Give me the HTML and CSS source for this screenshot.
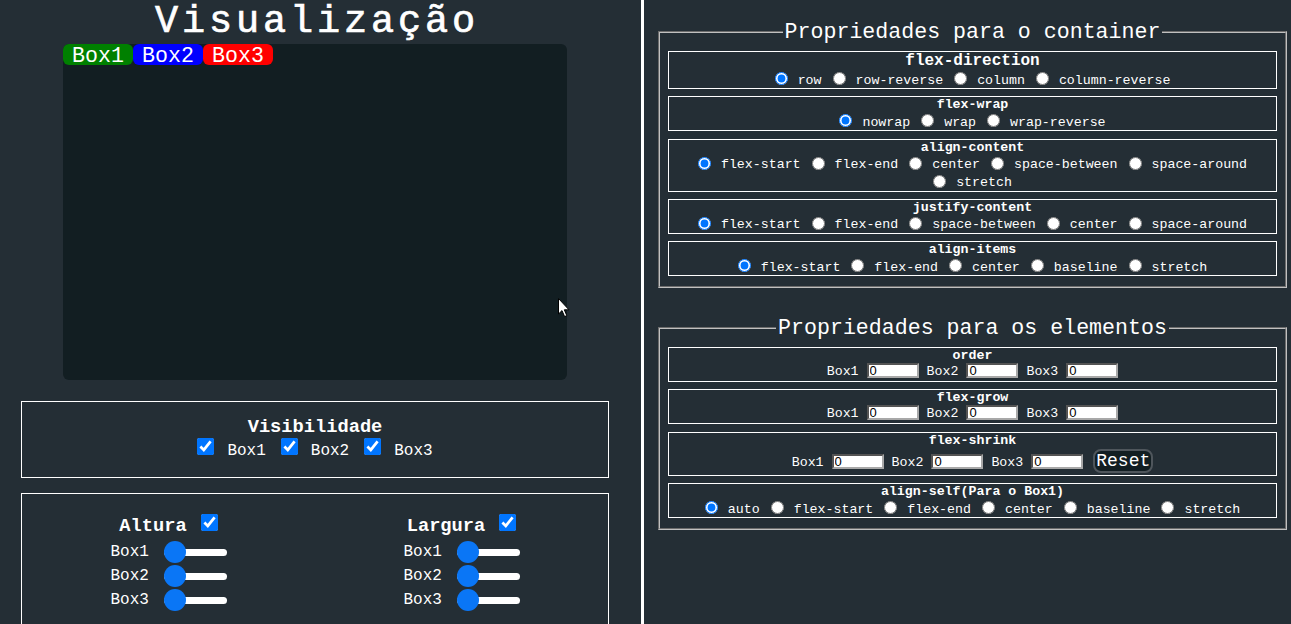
FILE: index.html
```html
<!DOCTYPE html>
<html lang="pt">
<head>
<meta charset="utf-8">
<title>Flexbox</title>
<link rel="stylesheet" href="styles.css">
</head>
<body>
<div class="page">
  <section class="left">
    <h1 class="title">Visualização</h1>
    <div class="preview">
      <div class="box b1">Box1</div>
      <div class="box b2">Box2</div>
      <div class="box b3">Box3</div>
    </div>
    <div class="panel vis">
      <h3 class="vhead">Visibilidade</h3>
      <div class="checks">
        <label class="chk"><input type="checkbox" checked><span>Box1</span></label>
        <label class="chk"><input type="checkbox" checked><span>Box2</span></label>
        <label class="chk"><input type="checkbox" checked><span>Box3</span></label>
      </div>
    </div>
    <div class="panel sizes">
      <div class="group">
        <div class="ghead"><span>Altura</span><input type="checkbox" checked></div>
        <div class="srows">
          <div class="srow"><span>Box1</span><input type="range" min="0" max="100" value="0"></div>
          <div class="srow"><span>Box2</span><input type="range" min="0" max="100" value="0"></div>
          <div class="srow"><span>Box3</span><input type="range" min="0" max="100" value="0"></div>
        </div>
      </div>
      <div class="group">
        <div class="ghead"><span>Largura</span><input type="checkbox" checked></div>
        <div class="srows">
          <div class="srow"><span>Box1</span><input type="range" min="0" max="100" value="0"></div>
          <div class="srow"><span>Box2</span><input type="range" min="0" max="100" value="0"></div>
          <div class="srow"><span>Box3</span><input type="range" min="0" max="100" value="0"></div>
        </div>
      </div>
    </div>
    <svg class="cursor" width="12" height="20" viewBox="0 0 12 20"><path d="M0.5 0.5 L0.5 16 L4 12.6 L6.6 18.6 L8.8 17.6 L6.3 11.8 L11 11.8 Z" fill="#fff" stroke="#000" stroke-width="1"/></svg>
  </section>

  <section class="right">
    <fieldset class="fs">
      <legend>Propriedades para o container</legend>
      <div class="pbox">
        <h4 class="phead big">flex-direction</h4>
        <div class="opts">
          <label class="opt"><input type="radio" name="fd" checked><span>row</span></label>
          <label class="opt"><input type="radio" name="fd"><span>row-reverse</span></label>
          <label class="opt"><input type="radio" name="fd"><span>column</span></label>
          <label class="opt"><input type="radio" name="fd"><span>column-reverse</span></label>
        </div>
      </div>
      <div class="pbox">
        <h5 class="phead">flex-wrap</h5>
        <div class="opts">
          <label class="opt"><input type="radio" name="fw" checked><span>nowrap</span></label>
          <label class="opt"><input type="radio" name="fw"><span>wrap</span></label>
          <label class="opt"><input type="radio" name="fw"><span>wrap-reverse</span></label>
        </div>
      </div>
      <div class="pbox">
        <h5 class="phead">align-content</h5>
        <div class="opts">
          <label class="opt"><input type="radio" name="ac" checked><span>flex-start</span></label>
          <label class="opt"><input type="radio" name="ac"><span>flex-end</span></label>
          <label class="opt"><input type="radio" name="ac"><span>center</span></label>
          <label class="opt"><input type="radio" name="ac"><span>space-between</span></label>
          <label class="opt"><input type="radio" name="ac"><span>space-around</span></label>
          <label class="opt"><input type="radio" name="ac"><span>stretch</span></label>
        </div>
      </div>
      <div class="pbox">
        <h5 class="phead">justify-content</h5>
        <div class="opts">
          <label class="opt"><input type="radio" name="jc" checked><span>flex-start</span></label>
          <label class="opt"><input type="radio" name="jc"><span>flex-end</span></label>
          <label class="opt"><input type="radio" name="jc"><span>space-between</span></label>
          <label class="opt"><input type="radio" name="jc"><span>center</span></label>
          <label class="opt"><input type="radio" name="jc"><span>space-around</span></label>
        </div>
      </div>
      <div class="pbox">
        <h5 class="phead">align-items</h5>
        <div class="opts">
          <label class="opt"><input type="radio" name="ai" checked><span>flex-start</span></label>
          <label class="opt"><input type="radio" name="ai"><span>flex-end</span></label>
          <label class="opt"><input type="radio" name="ai"><span>center</span></label>
          <label class="opt"><input type="radio" name="ai"><span>baseline</span></label>
          <label class="opt"><input type="radio" name="ai"><span>stretch</span></label>
        </div>
      </div>
    </fieldset>

    <fieldset class="fs fs2">
      <legend>Propriedades para os elementos</legend>
      <div class="pbox">
        <h5 class="phead">order</h5>
        <div class="irow">
          <span>Box1</span><input class="num" type="text" value="0">
          <span>Box2</span><input class="num" type="text" value="0">
          <span>Box3</span><input class="num" type="text" value="0">
        </div>
      </div>
      <div class="pbox">
        <h5 class="phead">flex-grow</h5>
        <div class="irow">
          <span>Box1</span><input class="num" type="text" value="0">
          <span>Box2</span><input class="num" type="text" value="0">
          <span>Box3</span><input class="num" type="text" value="0">
        </div>
      </div>
      <div class="pbox">
        <h5 class="phead">flex-shrink</h5>
        <div class="irow shrink">
          <span>Box1</span><input class="num" type="text" value="0">
          <span>Box2</span><input class="num" type="text" value="0">
          <span>Box3</span><input class="num" type="text" value="0">
          <button class="reset" type="button">Reset</button>
        </div>
      </div>
      <div class="pbox">
        <h5 class="phead">align-self(Para o Box1)</h5>
        <div class="opts">
          <label class="opt"><input type="radio" name="as" checked><span>auto</span></label>
          <label class="opt"><input type="radio" name="as"><span>flex-start</span></label>
          <label class="opt"><input type="radio" name="as"><span>flex-end</span></label>
          <label class="opt"><input type="radio" name="as"><span>center</span></label>
          <label class="opt"><input type="radio" name="as"><span>baseline</span></label>
          <label class="opt"><input type="radio" name="as"><span>stretch</span></label>
        </div>
      </div>
    </fieldset>
  </section>
</div>
</body>
</html>
```

FILE: styles.css
```css
* { box-sizing: border-box; }

html, body {
  margin: 0;
  height: 100%;
}

body {
  background: #242e35;
  color: #fff;
  font-family: "Liberation Mono", "DejaVu Sans Mono", monospace;
  overflow: hidden;
}

.page {
  display: flex;
  height: 624px;
}

/* ---------- left column ---------- */
.left {
  position: relative;
  flex: none;
  width: 644px;
  border-right: 3px solid #fff;
  padding-right: 11px;
}

.title {
  margin: 0;
  height: 44px;
  padding-left: 3.9px;
  font-size: 38.5px;
  font-weight: normal;
  letter-spacing: 3.9px;
  line-height: 44px;
  text-align: center;
  -webkit-text-stroke: 0.7px #fff;
}

.preview {
  width: 504px;
  height: 336px;
  margin: 0 auto;
  background: #121e22;
  border-radius: 6px;
  display: flex;
  align-items: flex-start;
}

.box {
  width: 70px;
  height: 21px;
  padding-top: 3px;
  font-size: 21.6px;
  line-height: 18px;
  text-align: center;
  border-radius: 6px;
  color: #fff;
}
.b1 { background: #008000; }
.b2 { background: #0000ff; }
.b3 { background: #ff0000; }

.panel {
  width: 588px;
  margin: 0 auto;
  border: 1px solid #fff;
}

.vis {
  margin-top: 21px;
  padding: 14px 0 17px;
  text-align: center;
}

.vhead {
  margin: 0;
  font-size: 18.72px;
  font-weight: bold;
}

.checks {
  display: flex;
  justify-content: center;
  align-items: baseline;
  gap: 15px;
  font-size: 16px;
}

.chk {
  display: inline-flex;
  align-items: baseline;
  gap: 13px;
}

input[type="checkbox"] {
  width: 17px;
  height: 17px;
  margin: 0;
  accent-color: #0075ff;
}

.sizes {
  margin-top: 15px;
  padding: 20px 0 30px;
  display: flex;
  justify-content: space-around;
}

.group {
  width: 116px;
  display: flex;
  flex-direction: column;
  align-items: center;
}

.ghead {
  display: flex;
  align-items: baseline;
  gap: 14px;
  font-size: 18.72px;
  font-weight: bold;
}

.srows {
  margin-top: 3px;
  width: 116px;
}

.srow {
  height: 24px;
  display: flex;
  align-items: center;
  justify-content: space-between;
  font-size: 16px;
}

input[type="range"] {
  -webkit-appearance: none;
  appearance: none;
  width: 63px;
  height: 22px;
  margin: 0;
  background: transparent;
}
input[type="range"]::-webkit-slider-runnable-track {
  height: 7px;
  background: #fff;
  border-radius: 4px;
}
input[type="range"]::-webkit-slider-thumb {
  -webkit-appearance: none;
  appearance: none;
  width: 22px;
  height: 22px;
  margin-top: -7.5px;
  border: none;
  border-radius: 50%;
  background: #0a76f6;
}

.cursor {
  position: absolute;
  left: 558px;
  top: 298px;
}

/* ---------- right column ---------- */
.right {
  flex: 1;
  min-width: 0;
  padding: 20px 4px 0 14px;
}

.fs {
  margin: 0;
  min-width: 0;
  border: 2px groove #c0c0c0;
  padding: 7px 8px 10px;
}

.fs2 {
  margin-top: 28px;
}

legend {
  margin: 0 auto;
  padding: 0 2px;
  font-size: 21.6px;
  line-height: normal;
}

.pbox {
  border: 1px solid #fff;
  text-align: center;
  margin-top: 7.3px;
}
legend + .pbox { margin-top: 0; }

.phead {
  margin: 0;
  font-size: 13.28px;
  font-weight: bold;
  line-height: normal;
}
.phead.big { font-size: 16px; }

.opts {
  display: flex;
  flex-wrap: wrap;
  justify-content: center;
  column-gap: 11px;
  font-size: 13.28px;
}

.opt {
  display: inline-flex;
  align-items: center;
  gap: 10px;
  height: 18px;
}
.opt span { margin-top: 2px; }

input[type="radio"] {
  width: 13px;
  height: 13px;
  margin: 0 0 1px;
  accent-color: #0075ff;
}

.irow {
  display: flex;
  justify-content: center;
  align-items: baseline;
  gap: 8px;
  min-height: 18px;
  font-size: 13.28px;
}
.irow.shrink { padding-bottom: 2px; padding-top: 1px; }

.num {
  width: 52px;
  height: 15px;
  margin: 0;
  padding: 0 1px;
  border-width: 2px;
  border-style: inset;
  border-color: #a8a8a8;
  background: #fff;
  color: #000;
  font: 13px "Liberation Sans", Arial, sans-serif;
  line-height: 11px;
}

.reset {
  margin: 0 0 0 2px;
  padding: 0 1px;
  height: 24px;
  background: #121e22;
  color: #fff;
  border: 2px solid #4f565c;
  border-radius: 8px;
  font: 18px "Liberation Mono", monospace;
  line-height: 20px;
}
```
